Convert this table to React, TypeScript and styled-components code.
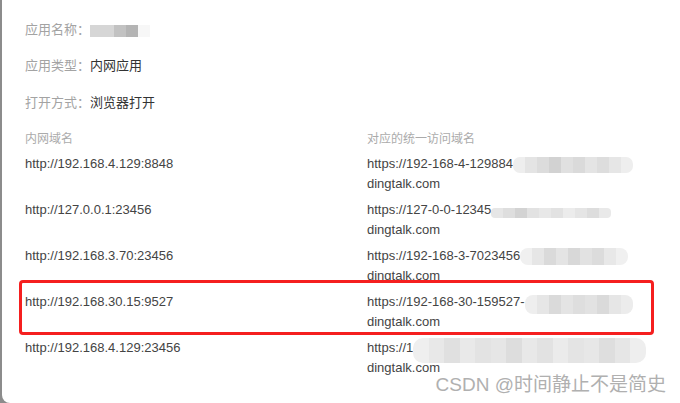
import React from "react";
import styled, { createGlobalStyle } from "styled-components";

const GlobalStyle = createGlobalStyle`
  html, body { margin: 0; padding: 0; background: #ffffff; }
  body { font-family: "Liberation Sans", "Noto Sans CJK SC", sans-serif; }
`;

const Frame = styled.div`
  display: flex;
  width: 680px;
  height: 403px;
  background: #8c8c8c;
  overflow: hidden;
`;

const Modal = styled.div`
  position: relative;
  flex: 1;
  margin-left: 2px;
  background: #ffffff;
  border-bottom-left-radius: 8px;
  padding: 18px 0 0 23px;
  box-sizing: border-box;
`;

const InfoRow = styled.div`
  display: flex;
  align-items: center;
  height: 20px;
  margin-bottom: 16.5px;
  font-size: 13px;
`;

const Label = styled.span`
  color: #a3a3a3;
  font-family: "Noto Sans CJK SC", sans-serif;
`;

const Value = styled.span`
  color: #333333;
  font-family: "Noto Sans CJK SC", sans-serif;
`;

const Table = styled.div`
  display: grid;
  grid-template-columns: 342px 1fr;
  row-gap: 6px;
  font-size: 13px;
  line-height: 20px;
`;

const HeadCell = styled.div`
  color: #ababab;
  font-size: 12px;
  font-family: "Noto Sans CJK SC", sans-serif;
  margin-bottom: 0;
`;

const Cell = styled.div`
  color: #444444;
`;

const Line = styled.div`
  display: flex;
  align-items: center;
  height: 20px;
  white-space: nowrap;
`;

const HighlightRow = styled.div`
  position: relative;
  grid-column: 1 / span 2;
  display: grid;
  grid-template-columns: 342px 1fr;
`;

const Highlight = styled.div`
  position: absolute;
  left: -6px;
  top: -12px;
  width: 635px;
  height: 55px;
  border: 3px solid #f51f1f;
  border-radius: 4px;
  box-sizing: border-box;
  pointer-events: none;
`;

const MosaicBox = styled.span<{ $h: number; $ml: number; $dy: number; $r: number }>`
  display: inline-flex;
  flex: none;
  height: ${(p) => p.$h}px;
  margin-left: ${(p) => p.$ml}px;
  transform: translateY(${(p) => p.$dy}px);
  border-radius: ${(p) => p.$r}px;
  overflow: hidden;
  filter: blur(0.7px);
`;

const MosaicCell = styled.span<{ $c: string; $w: number }>`
  display: block;
  width: ${(p) => p.$w}px;
  height: 100%;
  background: ${(p) => p.$c};
`;

function Mosaic({
  cells,
  h,
  w = 12,
  ml = 0,
  dy = 0,
  r = 0,
}: {
  cells: string[];
  h: number;
  w?: number;
  ml?: number;
  dy?: number;
  r?: number;
}) {
  return (
    <MosaicBox $h={h} $ml={ml} $dy={dy} $r={r}>
      {cells.map((c, i) => (
        <MosaicCell key={i} $c={c} $w={w} />
      ))}
    </MosaicBox>
  );
}

const Watermark = styled.div`
  position: absolute;
  right: 14px;
  bottom: 6px;
  font-size: 19px;
  line-height: 24px;
  color: #b0b0b0;
  font-family: "Liberation Sans", "Noto Sans CJK SC", sans-serif;
  text-shadow: 0 0 1px #ffffff, 0 0 1px #ffffff;
  white-space: nowrap;
`;

type Row = {
  inner: string;
  outer: string;
  mosaic: { cells: string[]; h: number; ml?: number; dy?: number; r?: number; w?: number };
};

const rows: Row[] = [
  {
    inner: "http://192.168.4.129:8848",
    outer: "https://192-168-4-129884",
    mosaic: {
      cells: ["#eeeeee", "#e4e4e4", "#dcdcdc", "#d2d2d2", "#e0e0e0", "#dadada", "#e4e4e4", "#dddddd", "#e6e6e6", "#eeeeee"],
      h: 16,
      dy: 1,
      r: 7,
    },
  },
  {
    inner: "http://127.0.0.1:23456",
    outer: "https://127-0-0-12345",
    mosaic: {
      cells: ["#e6e6e6", "#dedede", "#d3d3d3", "#e2e2e2", "#e8e8e8", "#e2e2e2", "#ececec", "#e5e5e5", "#dddddd", "#e9e9e9"],
      h: 10,
      dy: 3,
      r: 4,
    },
  },
  {
    inner: "http://192.168.3.70:23456",
    outer: "https://192-168-3-7023456",
    mosaic: {
      cells: ["#f0f0f0", "#e6e6e6", "#dadada", "#e4e4e4", "#d8d8d8", "#e2e2e2", "#dcdcdc", "#e8e8e8", "#f0f0f0"],
      h: 17,
      dy: 1,
      r: 8,
    },
  },
  {
    inner: "http://192.168.30.15:9527",
    outer: "https://192-168-30-159527-",
    mosaic: {
      cells: ["#eeeeee", "#e6e6e6", "#dadada", "#e4e4e4", "#dedede", "#e2e2e2", "#dadada", "#e6e6e6", "#ececec"],
      h: 19,
      dy: 3,
      r: 8,
    },
  },
  {
    inner: "http://192.168.4.129:23456",
    outer: "https://1",
    mosaic: {
      cells: [
        "#efefef", "#e8e8e8", "#e0e0e0", "#e9e9e9", "#e3e3e3", "#e6e6e6", "#dddddd", "#e8e8e8",
        "#e2e2e2", "#ebebeb", "#e4e4e4", "#e7e7e7", "#dedede", "#e6e6e6", "#eeeeee",
      ],
      h: 25,
      dy: 3,
      r: 10,
      w: 15.5,
    },
  },
];

function RowCells({ row }: { row: Row }) {
  return (
    <>
      <Cell>
        <Line>{row.inner}</Line>
      </Cell>
      <Cell>
        <Line>
          {row.outer}
          <Mosaic {...row.mosaic} />
        </Line>
        <Line>dingtalk.com</Line>
      </Cell>
    </>
  );
}

export default function App() {
  return (
    <>
      <GlobalStyle />
      <Frame>
        <Modal>
          <InfoRow>
            <Label>应用名称：</Label>
            <Mosaic
              cells={["#d6d6d6", "#d6d6d6", "#c2c2c2", "#b4b4b4", "#f7f7f7"]}
              h={12}
              ml={0}
              dy={3}
            />
          </InfoRow>
          <InfoRow>
            <Label>应用类型：</Label>
            <Value>内网应用</Value>
          </InfoRow>
          <InfoRow>
            <Label>打开方式：</Label>
            <Value>浏览器打开</Value>
          </InfoRow>
          <Table>
            <HeadCell>内网域名</HeadCell>
            <HeadCell>对应的统一访问域名</HeadCell>
            {rows.map((row, i) =>
              i === 3 ? (
                <HighlightRow key={i}>
                  <Highlight />
                  <RowCells row={row} />
                </HighlightRow>
              ) : (
                <RowCells key={i} row={row} />
              )
            )}
          </Table>
          <Watermark>CSDN @时间静止不是简史</Watermark>
        </Modal>
      </Frame>
    </>
  );
}
